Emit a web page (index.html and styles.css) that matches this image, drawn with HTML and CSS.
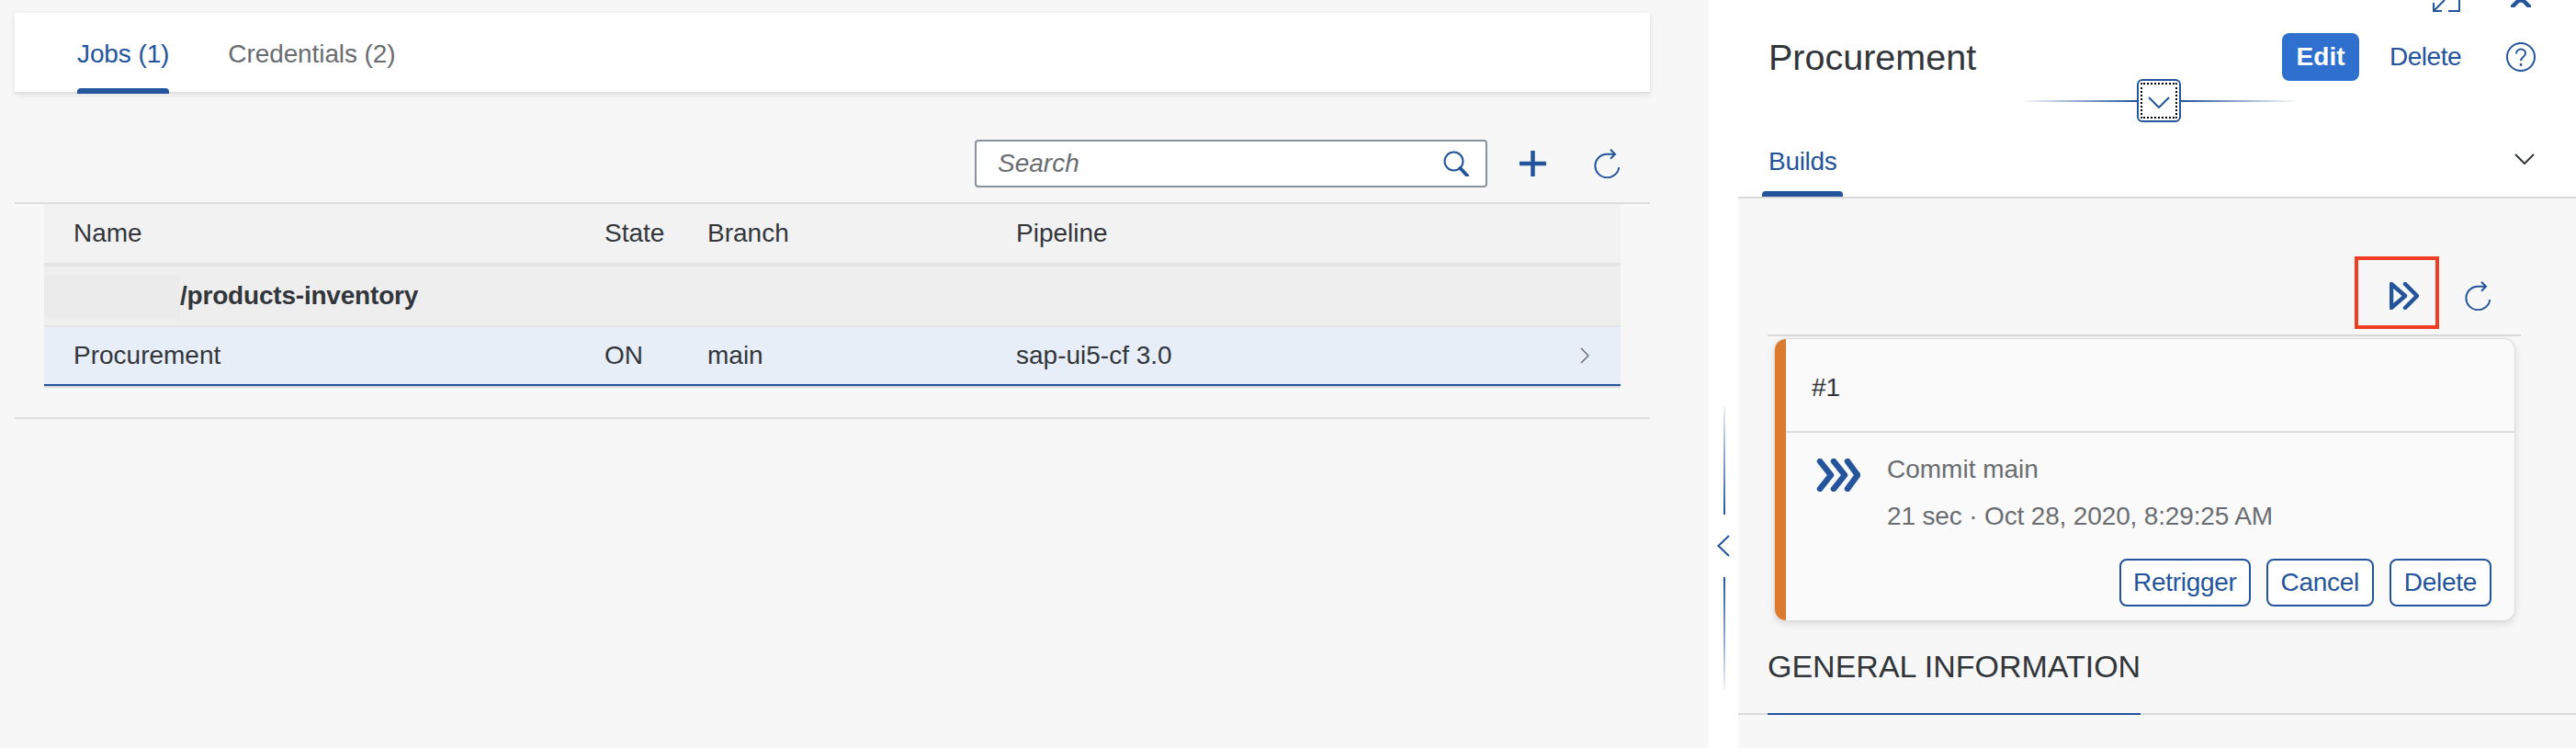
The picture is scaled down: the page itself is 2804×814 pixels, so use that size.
FILE: index.html
```html
<!DOCTYPE html>
<html lang="en">
<head>
<meta charset="utf-8">
<title>Procurement</title>
<link rel="stylesheet" href="styles.css">
</head>
<body>
<div class="page">
  <main class="main">
    <nav class="tabbar">
      <span class="tab tab-active">Jobs (1)</span>
      <span class="tab">Credentials (2)</span>
    </nav>
    <div class="toolbar">
      <div class="search">
        <span class="search-text">Search</span>
        <svg class="icon search-icon" viewBox="0 0 28 28"><circle cx="11.5" cy="11.5" r="10"/><path d="M18.5 19l8 8.5" class="thick"/></svg>
      </div>
      <svg class="icon plus-icon" viewBox="0 0 29 28"><path d="M0 14h29M14.5 0v28" class="heavy"/></svg>
      <svg class="icon refresh-icon" viewBox="0 0 28 32"><path d="M14 5.700A13 12.800 0 1 0 27.300 20"/><path d="M18 .7l5 5-5 5M14 5.700h9"/></svg>
    </div>
    <section class="table">
      <div class="row head-row"><span>Name</span><span>State</span><span>Branch</span><span>Pipeline</span></div>
      <div class="row group-row"><span class="masked"></span><span class="group-name">/products-inventory</span></div>
      <div class="row job-row">
        <span>Procurement</span><span>ON</span><span>main</span><span>sap-ui5-cf 3.0</span>
        <svg class="icon row-chevron" viewBox="0 0 10 18"><path d="M1 1l8 8-8 8"/></svg>
      </div>
    </section>
  </main>

  <aside class="panel">
    <div class="strip">
      <div class="split-line split-up"></div>
      <svg class="icon split-chevron" viewBox="0 0 14 24"><path d="M13 1L1.500 12 13 23"/></svg>
      <div class="split-line split-down"></div>
    </div>
    <div class="detail">
      <header class="detail-head">
        <div class="window-bar">
          <svg class="icon win-exit" viewBox="0 0 30 13"><path d="M13 0L1.500 11.500M1 3v9h9M17 12h12V0"/></svg>
          <svg class="icon win-close" viewBox="0 0 22 8"><path d="M1.500 7.500L8.500.5h5l7 7M8 0h6" class="heavy"/></svg>
        </div>
        <div class="title-row">
          <h1 class="title">Procurement</h1>
          <button class="btn-edit">Edit</button>
          <span class="link-delete">Delete</span>
          <svg class="icon help-icon" viewBox="0 0 32 32"><circle cx="16" cy="16" r="15"/><path d="M11 12.500c0-3 2.200-5 5-5s5 2 5 4.500c0 4-5 4-5 8"/><circle cx="16" cy="24.500" r="1.400" class="dot"/></svg>
        </div>
        <div class="sub-tabs">
          <span class="sub-tab">Builds</span>
          <svg class="icon sub-chevron" viewBox="0 0 22 12"><path d="M1 1l10 10L21 1"/></svg>
        </div>
        <div class="collapse">
          <div class="collapse-line left-line"></div>
          <button class="collapse-btn"><svg class="icon collapse-chevron" viewBox="0 0 24 13"><path d="M1 1l11 11L23 1"/></svg></button>
          <div class="collapse-line right-line"></div>
        </div>
      </header>

      <div class="builds">
        <div class="builds-bar">
          <div class="run-box">
            <svg class="icon run-icon" viewBox="0 0 32 30"><path d="M2 2v26L17 15z" class="heavy"/><path d="M17 2l13 13-13 13" class="heavy"/></svg>
          </div>
          <svg class="icon builds-refresh" viewBox="0 0 28 32"><path d="M14 5.700A13 12.800 0 1 0 27.300 20"/><path d="M18 .7l5 5-5 5M14 5.700h9"/></svg>
        </div>
        <article class="card">
          <div class="card-accent"></div>
          <div class="card-main">
            <div class="card-head">#1</div>
            <div class="card-body">
              <svg class="icon status-icon" viewBox="0 0 48 36"><path d="M4 3l12 15L4 33M19 3l12 15-12 15M34 3l11 15-11 15" class="status-stroke"/></svg>
              <div class="card-text">
                <div>Commit main</div>
                <div class="card-date">21 sec · Oct 28, 2020, 8:29:25 AM</div>
              </div>
            </div>
            <div class="card-actions">
              <button class="btn btn-wide">Retrigger</button>
              <button class="btn">Cancel</button>
              <button class="btn">Delete</button>
            </div>
          </div>
        </article>
      </div>

      <div class="section-bar"><span class="section-title">GENERAL INFORMATION</span></div>
    </div>
  </aside>
</div>
</body>
</html>
```

FILE: styles.css
```css
* { box-sizing: border-box; }
html, body { margin: 0; padding: 0; }
body {
  background: #f7f7f7;
  color: #32363a;
  font-family: "Liberation Sans", Arial, sans-serif;
  font-size: 28px;
}
button { font-family: inherit; }
.page { display: flex; width: 2804px; height: 814px; overflow: hidden; }

.icon { display: block; fill: none; stroke: #23549c; stroke-width: 2; flex: none; }
.icon .thick { stroke-width: 4; stroke-linecap: round; }
.icon .heavy { stroke-width: 4.500; stroke-linecap: round; stroke-linejoin: round; }
.icon .dot { fill: #23549c; stroke: none; }

/* left column */
.main { width: 1860px; flex: none; padding: 14px 64px 0 16px; }
.tabbar {
  display: flex;
  gap: 64px;
  height: 87px;
  padding-left: 68px;
  background: #fff;
  border-bottom: 1px solid #dcdcdc;
  box-shadow: 0 2px 6px rgba(0, 0, 0, .1);
}
.tab {
  position: relative;
  display: flex;
  align-items: center;
  padding-top: 3px;
  color: #6a6d70;
  letter-spacing: -.1px;
}
.tab-active { color: #23549c; }
.tab-active::after {
  content: "";
  position: absolute;
  left: 0;
  right: 0;
  bottom: -2px;
  height: 6px;
  background: #23549c;
  border-radius: 4px 4px 0 0;
}
.toolbar {
  display: flex;
  justify-content: flex-end;
  align-items: flex-start;
  height: 119px;
  padding: 51px 33px 0 0;
}
.search {
  display: flex;
  align-items: center;
  justify-content: space-between;
  width: 558px;
  height: 52px;
  padding: 0 18px 0 23px;
  background: #fff;
  border: 2px solid #89919a;
  border-radius: 4px;
}
.search-text { font-style: italic; color: #6a6d70; }
.search-icon { width: 28px; height: 28px; }
.plus-icon { width: 29px; height: 28px; margin: 12px 0 0 35px; }
.refresh-icon { width: 28px; height: 32px; margin: 10px 0 0 52px; }

.table { border-top: 2px solid #dedede; border-bottom: 2px solid #dedede; height: 236px; }
.row {
  display: grid;
  grid-template-columns: 578px 112px 336px 1fr;
  align-items: center;
  position: relative;
  margin: 0 32px;
  padding-left: 32px;
}
.head-row { height: 68px; background: #f2f2f2; border-bottom: 4px solid #e5e5e5; }
.group-row {
  display: flex;
  height: 66px;
  padding: 0;
  background: #eee;
  border-bottom: 2px solid #e5e5e5;
}
.masked { width: 148px; height: 47px; background: #ebebeb; }
.group-name { font-weight: 700; letter-spacing: -.2px; }
.job-row { height: 64px; background: #e7eef8; border-bottom: 2px solid #23549c; box-shadow: 0 2px 0 #d9d9d9; }
.row-chevron { position: absolute; right: 34px; top: 22px; width: 10px; height: 18px; stroke: #6a6d70; stroke-width: 1.500; }

/* right panel */
.panel { display: flex; flex: 1; min-width: 0; }
.strip {
  display: flex;
  flex-direction: column;
  width: 32px;
  flex: none;
  padding-top: 442px;
  background: #fff;
}
.split-line { width: 2px; margin-left: 16px; }
.split-up { height: 118px; background: linear-gradient(to bottom, rgba(35, 84, 156, .08), #23549c); }
.split-down { height: 122px; background: linear-gradient(to top, rgba(35, 84, 156, .08), #23549c); }
.split-chevron { width: 14px; height: 24px; margin: 22px 0 22px 9px; }

.detail { flex: 1; min-width: 0; }
.detail-head { position: relative; height: 216px; padding-left: 33px; background: #fff; border-bottom: 2px solid #d9d9d9; }
.window-bar { display: flex; height: 36px; padding-right: 49px; justify-content: flex-end; }
.win-exit { width: 30px; height: 13px; }
.win-close { width: 22px; height: 8px; margin-left: 55px; }
.title-row { display: flex; align-items: center; height: 52px; }
.title { flex: 1; margin: 0; font-size: 39.500px; font-weight: 400; }
.btn-edit {
  width: 84px;
  height: 52px;
  padding: 0;
  color: #fff;
  background: #2f6fce;
  border: 0;
  border-radius: 8px;
  font-size: 28px;
  font-weight: 700;
}
.link-delete { margin-left: 33px; color: #23549c; letter-spacing: -.5px; }
.help-icon { width: 32px; height: 32px; margin: 0 44px 0 49px; }
.sub-tabs { display: flex; align-items: center; justify-content: space-between; height: 80px; margin: 46px 45px 0 -7px; }
.sub-tab {
  position: relative;
  display: flex;
  align-items: center;
  height: 80px;
  padding: 3px 7px 0;
  color: #23549c;
  letter-spacing: -.3px;
}
.sub-tab::after {
  content: "";
  position: absolute;
  left: 0;
  right: 0;
  bottom: 0;
  height: 6px;
  background: #23549c;
  border-radius: 4px 4px 0 0;
}
.sub-chevron { width: 22px; height: 12px; margin-top: -2px; stroke: #32363a; }
.collapse { position: absolute; left: 306px; top: 86px; display: flex; align-items: center; }
.collapse-line { width: 128px; height: 2px; }
.left-line { background: linear-gradient(to right, rgba(35, 84, 156, 0), #23549c); }
.right-line { background: linear-gradient(to left, rgba(35, 84, 156, 0), #23549c); }
.collapse-btn {
  display: flex;
  align-items: center;
  justify-content: center;
  width: 48px;
  height: 47px;
  padding: 0;
  background: #fff;
  border: 2px solid #23549c;
  border-radius: 6px;
  outline: 2px dotted #000;
  outline-offset: -6px;
}
.collapse-chevron { width: 24px; height: 13px; margin-top: 4px; }

.builds { padding-left: 32px; }
.builds-bar {
  display: flex;
  justify-content: flex-end;
  width: 820px;
  height: 150px;
  padding: 63px 33px 0 0;
  border-bottom: 2px solid #dadada;
}
.run-box {
  width: 92px;
  height: 79px;
  padding: 24px 0 0 34px;
  border: 4px solid #ee3f24;
}
.run-icon { width: 32px; height: 30px; }
.builds-refresh { width: 28px; height: 32px; margin: 27px 0 0 28px; }

.card {
  display: flex;
  width: 805px;
  height: 306px;
  margin: 3px 0 0 8px;
  overflow: hidden;
  background: #fafafa;
  border-radius: 12px;
  box-shadow: 0 0 0 1px #dcdcdc, 0 3px 10px rgba(0, 0, 0, .14);
}
.card-accent { width: 12px; flex: none; background: #dc7a2e; }
.card-main { flex: 1; min-width: 0; }
.card-head {
  display: flex;
  align-items: center;
  height: 102px;
  padding: 6px 0 0 28px;
  border-bottom: 2px solid #dcdcdc;
}
.card-body { display: flex; padding: 24px 0 0 33px; height: 137px; }
.status-icon { width: 48px; height: 36px; margin-top: 4px; }
.status-stroke { stroke-width: 6.500; stroke-linecap: round; stroke-linejoin: round; }
.card-text { margin-left: 29px; color: #6a6d70; line-height: 32px; }
.card-date { margin-top: 19px; letter-spacing: -.15px; }
.card-actions { display: flex; justify-content: flex-end; gap: 17px; padding-right: 25px; }
.btn {
  height: 52px;
  padding: 0 14px;
  color: #23549c;
  background: #fff;
  border: 2px solid #23549c;
  border-radius: 8px;
  font-size: 28px;
  letter-spacing: -.3px;
}
.btn-wide { padding: 0 13px; }

.section-bar { height: 103px; padding: 24px 0 0 32px; border-bottom: 2px solid #dadada; }
.section-title {
  display: inline-block;
  height: 79px;
  font-size: 34px;
  line-height: 52px;
  border-bottom: 2px solid #23549c;
}
```
